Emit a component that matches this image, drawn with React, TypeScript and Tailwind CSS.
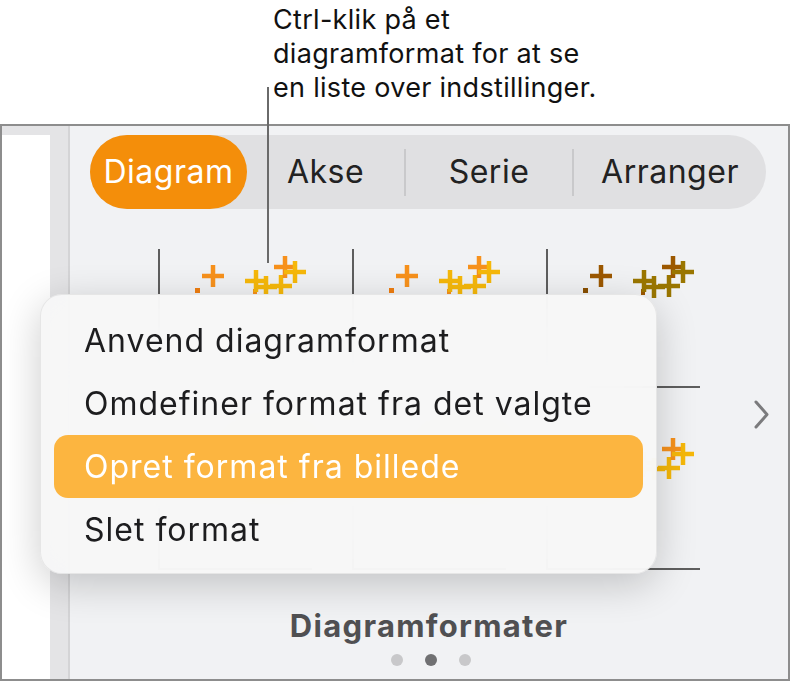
import React from "react";

type P = { x: number; y: number; c: string };

const Plus = ({ x, y, c }: P) => (
  <g stroke={c} strokeWidth={4.5} strokeLinecap="butt">
    <line x1={x - 11} y1={y} x2={x + 11} y2={y} />
    <line x1={x} y1={y - 11} x2={x} y2={y + 11} />
  </g>
);

const Chart = ({ a, b, d }: { a: string; b: string; d: string }) => {
  const pts: P[] = [
    { x: 55, y: 27, c: a },
    { x: 108, y: 38, c: b },
    { x: 123, y: 37, c: b },
    { x: 98, y: 32, c: b },
    { x: 127, y: 18, c: a },
    { x: 137, y: 23, c: b },
  ];
  return (
    <svg width="154" height="140" viewBox="0 0 154 140" className="block">
      <line x1="1" y1="0" x2="1" y2="139" stroke="#5e5e5e" strokeWidth="2" />
      <line x1="0" y1="138" x2="154" y2="138" stroke="#5e5e5e" strokeWidth="2" />
      <rect x="37" y="39" width="5" height="5" fill={d} />
      <rect x="95" y="40" width="4" height="6" fill={a} />
      {pts.map((p, i) => (
        <Plus key={i} {...p} />
      ))}
    </svg>
  );
};

export default function App() {
  const font = { fontFamily: "Inter, 'Noto Sans', sans-serif" };
  return (
    <div
      className="relative w-[790px] h-[681px] bg-white overflow-hidden text-[#1f1f1f]"
      style={font}
    >
      {/* callout */}
      <div className="h-[124px] pl-[273px] pt-[3px] text-[27px] leading-[34px] tracking-[0.3px] text-[#111]">
        <div>Ctrl-klik på et</div>
        <div>diagramformat for at se</div>
        <div>en liste over indstillinger.</div>
      </div>

      {/* window */}
      <div className="h-[557px] border-2 border-[#8d8d8d] bg-[#e4e4e6] flex">
        <div className="w-[48px] pt-[9px] flex flex-col">
          <div className="flex-1 bg-white"></div>
        </div>
        <div className="w-[20px] bg-[#e4e4e6] border-r-2 border-[#d4d4d6]"></div>
        <div className="relative flex-1 bg-[#f1f2f4] flex flex-col">
          {/* segmented */}
          <div className="ml-[20px] mt-[9px] w-[676px] h-[74px] rounded-full bg-[#e0e0e2] flex items-center text-[32px] tracking-[0.5px] text-[#222]">
            <div className="w-[157px] h-full rounded-full bg-[#f48e0a] text-white flex items-center justify-center">
              Diagram
            </div>
            <div className="w-[157px] h-full flex items-center justify-center">Akse</div>
            <div className="w-[2px] h-[47px] bg-[#c9c9cb]"></div>
            <div className="w-[166px] h-full flex items-center justify-center">Serie</div>
            <div className="w-[2px] h-[47px] bg-[#c9c9cb]"></div>
            <div className="flex-1 h-full flex items-center justify-center">Arranger</div>
          </div>

          {/* charts */}
          <div className="ml-[88px] mt-[40px] grid grid-cols-[154px_154px_154px] gap-x-[40px] gap-y-[42px]">
            <Chart a="#f7911c" b="#f6b80a" d="#f07e10" />
            <Chart a="#f7911c" b="#f6b80a" d="#f07e10" />
            <Chart a="#9c5800" b="#9a7600" d="#8a5000" />
            <Chart a="#f7911c" b="#f6b80a" d="#f07e10" />
            <Chart a="#f7911c" b="#f6b80a" d="#f07e10" />
            <Chart a="#f7911c" b="#f6b80a" d="#f07e10" />
          </div>

          {/* chevron */}
          <svg
            className="absolute left-[684px] top-[274px]"
            width="16"
            height="30"
            viewBox="0 0 16 30"
          >
            <polyline
              points="2,2 13,14.5 2,27"
              fill="none"
              stroke="#7b7b7d"
              strokeWidth="3"
              strokeLinecap="round"
              strokeLinejoin="round"
            />
          </svg>

          <div className="mt-[37px] text-center text-[31px] leading-[36px] font-bold tracking-[1.3px] text-[#505052]">
            Diagramformater
          </div>
          <div className="mt-[10px] ml-[3px] flex justify-center gap-[22px]">
            <div className="w-[12px] h-[12px] rounded-full bg-[#c8c8ca]"></div>
            <div className="w-[12px] h-[12px] rounded-full bg-[#707072]"></div>
            <div className="w-[12px] h-[12px] rounded-full bg-[#c8c8ca]"></div>
          </div>
        </div>
      </div>

      {/* context menu */}
      <div className="absolute left-[40px] top-[294px] w-[617px] h-[280px] rounded-[22px] bg-[#f7f7f7]/[0.96] backdrop-blur-2xl border border-black/[0.07] shadow-[0_10px_40px_rgba(0,0,0,0.2)] px-[13px] py-[14px] text-[32px] tracking-[1px] text-[#1d1d1f]">
        <div className="h-[63px] flex items-center pl-[30px]">Anvend diagramformat</div>
        <div className="h-[63px] flex items-center pl-[30px]">Omdefiner format fra det valgte</div>
        <div className="h-[63px] flex items-center pl-[30px] rounded-[14px] bg-[#fcb540] text-white">
          Opret format fra billede
        </div>
        <div className="h-[63px] flex items-center pl-[30px]">Slet format</div>
      </div>

      {/* leader line */}
      <div className="absolute left-[267px] top-[87px] w-[2px] h-[176px] bg-[#6a6a6a]"></div>
    </div>
  );
}
